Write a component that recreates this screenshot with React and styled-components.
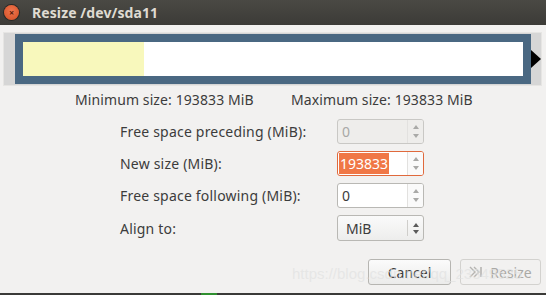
import styled, { createGlobalStyle } from "styled-components";

const GlobalStyle = createGlobalStyle`
  html, body {
    margin: 0;
    padding: 0;
    background: #f2f1f0;
  }
  body {
    font-family: "Noto Sans", "Open Sans", sans-serif;
    color: #3c3c3c;
  }
`;

const Window = styled.div`
  position: relative;
  width: 546px;
  height: 295px;
  overflow: hidden;
  display: flex;
  flex-direction: column;
  background: #f2f1f0;
`;

const TitleBar = styled.div`
  height: 25px;
  flex: none;
  display: flex;
  align-items: center;
  background: linear-gradient(#4a4944, #3c3b37);
  padding-left: 4px;
  gap: 13px;
`;

const CloseButton = styled.div`
  width: 15px;
  height: 15px;
  border-radius: 50%;
  background: radial-gradient(circle at 50% 40%, #f0764f, #d24d22);
  box-shadow: 0 0 0 1px #2a2926;
  display: flex;
  align-items: center;
  justify-content: center;
  color: #5a1a08;
  font-size: 9px;
  font-weight: bold;
  line-height: 1;
`;

const Title = styled.div`
  font-size: 14px;
  font-weight: bold;
  color: #dfdbd2;
  letter-spacing: 0.1px;
`;

const BarFrame = styled.div`
  margin: 7px 0 0 3px;
  width: 539px;
  height: 54px;
  box-sizing: border-box;
  border: 1px solid #e6e5e3;
  background: #d6d6d6;
  display: flex;
  align-items: stretch;
  padding: 1px 0 1px 11px;
`;

const Partition = styled.div`
  width: 516px;
  box-sizing: border-box;
  border: 8px solid #4a6882;
  background: #ffffff;
  display: flex;
`;

const UsedPart = styled.div`
  width: 121px;
  background: #f8f8bc;
`;

const EndArrow = styled.div`
  flex: 1;
  display: flex;
  align-items: center;
  &::after {
    content: "";
    width: 0;
    height: 0;
    border-top: 9px solid transparent;
    border-bottom: 9px solid transparent;
    border-left: 10px solid #000;
  }
`;

const InfoRow = styled.div`
  margin-top: 6px;
  padding-left: 75px;
  display: grid;
  grid-template-columns: 216px auto;
  font-size: 14px;
  letter-spacing: 0.1px;
  line-height: 16px;
`;

const Form = styled.div`
  margin-top: 11px;
  padding-left: 120px;
  display: grid;
  grid-template-columns: 217px 87px;
  row-gap: 7px;
  font-size: 14px;
  letter-spacing: 0.2px;
`;

const Label = styled.div`
  display: flex;
  align-items: center;
`;

const Field = styled.div`
  height: ${(p) => (p.tall ? "26px" : "25px")};
  box-sizing: border-box;
  display: flex;
  border: 1px solid ${(p) => (p.focused ? "#e0693c" : p.disabled ? "#c9c8c5" : "#b9b8b4")};
  border-radius: 3px;
  background: ${(p) => (p.disabled ? "#eeedeb" : p.button ? "linear-gradient(#fafafa, #ededec)" : "#ffffff")};
  color: ${(p) => (p.disabled ? "#a8a8a6" : "#3c3c3c")};
  overflow: hidden;
  letter-spacing: 0;
`;

const FieldText = styled.div`
  flex: 1;
  display: flex;
  align-items: center;
  padding-left: ${(p) => (p.select ? "8px" : "4px")};
  font-size: 14px;
`;

const Selected = styled.span`
  background: #f07746;
  color: #ffffff;
  align-self: stretch;
  display: flex;
  align-items: center;
  padding: 0 1px;
  margin: 1px 0 1px -3px;
`;

const Spin = styled.div`
  width: 15px;
  flex: none;
  display: flex;
  flex-direction: column;
  align-items: center;
  justify-content: center;
  gap: ${(p) => (p.select ? "3px" : "5px")};
  border-left: 1px solid ${(p) => (p.select ? "#cfcecb" : "#e2e1df")};
  margin: ${(p) => (p.select ? "4px 0" : "0")};
  background: ${(p) => (p.select ? "transparent" : p.disabled ? "#eeedeb" : "#fafafa")};
`;

const Arrow = styled.div`
  width: 0;
  height: 0;
  border-left: 3px solid transparent;
  border-right: 3px solid transparent;
  ${(p) =>
    p.up
      ? `border-bottom: 4px solid ${p.dark ? "#5a5a5a" : "#a9a9a7"};`
      : `border-top: 4px solid ${p.dark ? "#5a5a5a" : "#a9a9a7"};`}
`;

const ButtonRow = styled.div`
  margin-top: 18px;
  display: flex;
  justify-content: flex-end;
  gap: 9px;
  padding-right: 5px;
`;

const Button = styled.div`
  height: 26px;
  width: ${(p) => p.width}px;
  box-sizing: border-box;
  border: 1px solid ${(p) => (p.disabled ? "#d3d2cf" : "#b6b5b1")};
  border-radius: 3px;
  background: ${(p) => (p.disabled ? "#f2f1f0" : "linear-gradient(#fbfbfb, #ebebea)")};
  color: ${(p) => (p.disabled ? "#aaa9a6" : "#3c3c3c")};
  display: flex;
  align-items: center;
  justify-content: center;
  gap: 7px;
  font-size: 14px;
`;

const BottomEdge = styled.div`
  margin-top: auto;
  height: 2px;
  background: #3a3a38;
  display: flex;
  padding-left: 201px;
  &::before {
    content: "";
    width: 16px;
    background: #2f8f2f;
  }
`;

const Watermark = styled.div`
  position: absolute;
  left: 292px;
  top: 265px;
  font-family: "Liberation Sans", sans-serif;
  font-size: 15px;
  color: rgba(225, 225, 225, 0.7);
  white-space: nowrap;
  pointer-events: none;
`;

function SpinField({ value, disabled, focused }) {
  return (
    <Field disabled={disabled} focused={focused}>
      <FieldText>{focused ? <Selected>{value}</Selected> : value}</FieldText>
      <Spin disabled={disabled}>
        <Arrow up />
        <Arrow />
      </Spin>
    </Field>
  );
}

export default function App() {
  return (
    <>
      <GlobalStyle />
      <Window>
        <TitleBar>
          <CloseButton>×</CloseButton>
          <Title>Resize /dev/sda11</Title>
        </TitleBar>

        <BarFrame>
          <Partition>
            <UsedPart />
          </Partition>
          <EndArrow />
        </BarFrame>

        <InfoRow>
          <span>Minimum size: 193833 MiB</span>
          <span>Maximum size: 193833 MiB</span>
        </InfoRow>

        <Form>
          <Label>Free space preceding (MiB):</Label>
          <SpinField value="0" disabled />
          <Label>New size (MiB):</Label>
          <SpinField value="193833" focused />
          <Label>Free space following (MiB):</Label>
          <SpinField value="0" />
          <Label>Align to:</Label>
          <Field tall button>
            <FieldText select>MiB</FieldText>
            <Spin select>
              <Arrow up dark />
              <Arrow dark />
            </Spin>
          </Field>
        </Form>

        <ButtonRow>
          <Button width={83}>Cancel</Button>
          <Button width={81} disabled>
            <svg width="14" height="12" viewBox="0 0 14 12">
              <path d="M1 1 L6 6 L1 11 M5 1 L10 6 L5 11" fill="none" stroke="#b5b4b1" strokeWidth="1.4" />
              <path d="M12 1 V11" stroke="#b5b4b1" strokeWidth="1.6" />
            </svg>
            Resize
          </Button>
        </ButtonRow>

        <BottomEdge />
        <Watermark>https://blog.csdn.net/qq_23349525</Watermark>
      </Window>
    </>
  );
}
